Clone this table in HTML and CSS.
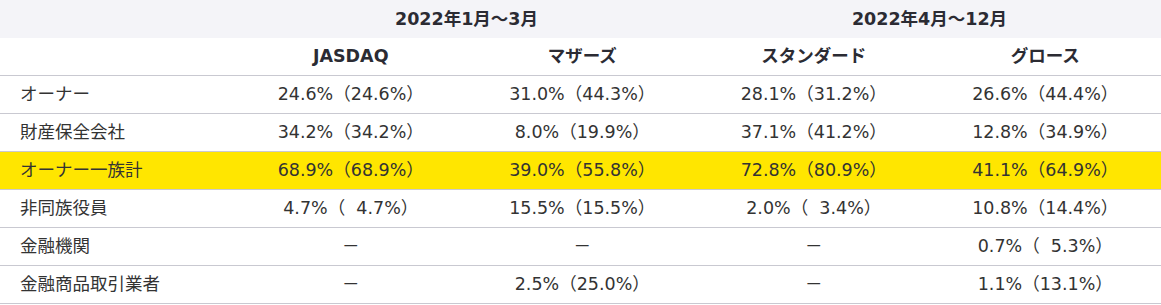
FILE: index.html
```html
<!DOCTYPE html>
<html lang="ja">
<head>
    <meta charset="UTF-8">
    <title>株主構成</title>
    <link rel="stylesheet" href="styles.css">
</head>
<body>
    <table class="share-table">
        <colgroup>
            <col class="col-label">
            <col><col><col><col>
        </colgroup>
        <thead>
            <tr class="period-row">
                <th></th>
                <th colspan="2">2022年1月～3月</th>
                <th colspan="2">2022年4月～12月</th>
            </tr>
            <tr class="market-row">
                <th></th>
                <th>JASDAQ</th>
                <th>マザーズ</th>
                <th>スタンダード</th>
                <th>グロース</th>
            </tr>
        </thead>
        <tbody>
            <tr>
                <td class="label">オーナー</td>
                <td>24.6%（24.6%）</td>
                <td>31.0%（44.3%）</td>
                <td>28.1%（31.2%）</td>
                <td>26.6%（44.4%）</td>
            </tr>
            <tr>
                <td class="label">財産保全会社</td>
                <td>34.2%（34.2%）</td>
                <td>8.0%（19.9%）</td>
                <td>37.1%（41.2%）</td>
                <td>12.8%（34.9%）</td>
            </tr>
            <tr class="highlight">
                <td class="label">オーナー一族計</td>
                <td>68.9%（68.9%）</td>
                <td>39.0%（55.8%）</td>
                <td>72.8%（80.9%）</td>
                <td>41.1%（64.9%）</td>
            </tr>
            <tr>
                <td class="label">非同族役員</td>
                <td>4.7%（&nbsp;&nbsp;4.7%）</td>
                <td>15.5%（15.5%）</td>
                <td>2.0%（&nbsp;&nbsp;3.4%）</td>
                <td>10.8%（14.4%）</td>
            </tr>
            <tr>
                <td class="label">金融機関</td>
                <td>－</td>
                <td>－</td>
                <td>－</td>
                <td>0.7%（&nbsp;&nbsp;5.3%）</td>
            </tr>
            <tr>
                <td class="label">金融商品取引業者</td>
                <td>－</td>
                <td>2.5%（25.0%）</td>
                <td>－</td>
                <td>1.1%（13.1%）</td>
            </tr>
        </tbody>
    </table>
</body>
</html>
```

FILE: styles.css
```css
body {
    margin: 0;
    padding: 0;
    background: #fff;
    font-family: "DejaVu Sans", "Noto Sans CJK JP", sans-serif;
    font-size: 17.5px;
    color: #333;
}
.share-table {
    width: 100%;
    border-collapse: collapse;
    table-layout: fixed;
}
.col-label {
    width: 235px;
}
.share-table th,
.share-table td {
    height: 37px;
    padding: 0;
    line-height: 1.2;
    text-align: center;
    white-space: nowrap;
}
.share-table th {
    font-weight: bold;
    color: #2b2b33;
}
.period-row th {
    background-color: #f4f4f8;
    height: 38px;
}
.market-row th,
.share-table tbody td {
    border-bottom: 1px solid #c9c9d1;
}
.share-table td.label {
    text-align: left;
    padding-left: 20px;
}
.highlight td {
    background-color: #ffe600;
    border-bottom-color: #ffe600;
}
```
